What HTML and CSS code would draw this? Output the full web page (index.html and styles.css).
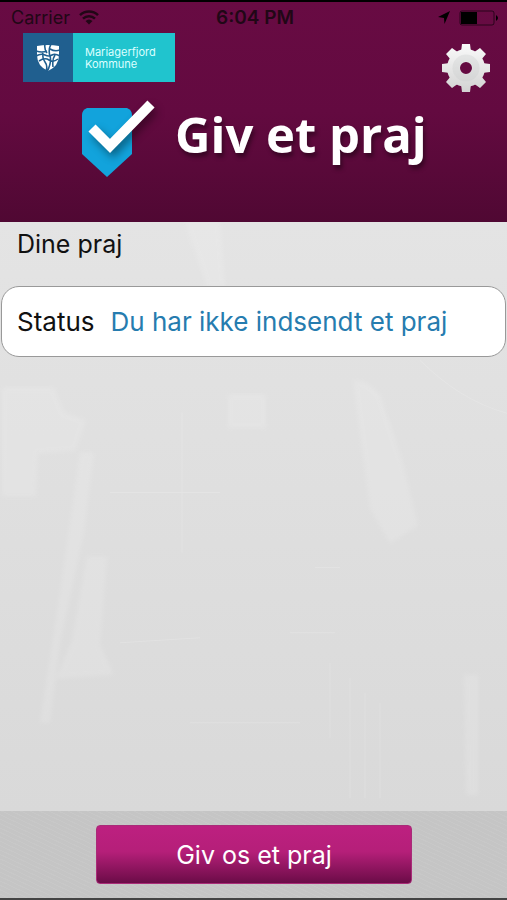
FILE: index.html
```html
<!DOCTYPE html>
<html lang="da">
<head>
<meta charset="utf-8">
<meta name="viewport" content="width=device-width, initial-scale=1">
<title>Giv et praj</title>
<link rel="stylesheet" href="styles.css">
</head>
<body>
<div class="app">
  <header class="header">
    <div class="statusbar">
      <div class="carrier">
        <span>Carrier</span>
        <svg class="wifi" viewBox="0 0 20 15" aria-hidden="true">
          <path d="M1 5.2C6 .4 14 .4 19 5.2M4 8.6c3.400-3.200 8.600-3.200 12 0" fill="none" stroke="currentColor" stroke-width="2.500"/>
          <path d="M6.500 11q3.500-3 7 0L10 14.500z" fill="currentColor"/>
        </svg>
      </div>
      <time class="clock">6:04 PM</time>
      <div class="indicators">
        <svg class="location" viewBox="0 0 12 13" aria-hidden="true"><path d="M12 0 6.500 13 6 7 0 6z" fill="currentColor"/></svg>
        <svg class="battery" viewBox="0 0 40 16" aria-hidden="true">
          <rect x="1" y="1" width="34" height="14" rx="2" fill="none" stroke="currentColor" stroke-width="1" opacity=".6"/>
          <path d="M2 2h16v12H2z" fill="currentColor"/>
          <path d="M37 5q4 3 0 6z" fill="currentColor"/>
        </svg>
      </div>
    </div>
    <div class="toolbar">
      <div class="municipality">
        <span class="crest">
          <svg viewBox="0 0 24 28" aria-hidden="true">
            <path d="M1 2q11-2 22 0v9q0 11-11 16Q1 22 1 11z" fill="#fff"/>
            <path d="M0 7q6 2 11 0M14 5q5 3 10 1M0 12q5-3 9-1t7 0 8 1M3 17q6-4 10-1t9-1M9 0q-1 5 2 9M15 0q-3 6-1 12t-3 16M7 9q-1 5 2 9t1 9M19 11q-3 4-2 12" fill="none" stroke="#205f8f" stroke-width="1.600"/>
          </svg>
        </span>
        <span class="municipality-name">Mariagerfjord<br>Kommune</span>
      </div>
      <button class="settings" type="button" aria-label="Indstillinger">
        <svg viewBox="0 0 48 48" aria-hidden="true">
          <defs>
            <linearGradient id="metal" gradientUnits="userSpaceOnUse" x1="0" y1="0" x2="0" y2="48"><stop stop-color="#fafafa"/><stop offset="1" stop-color="#d2d2d2"/></linearGradient>
          </defs>
          <g fill="url(#metal)">
            <path d="M19 8 20 0h8l1 8zM19 40l1 8h8l1-8z"/>
            <path d="M8 19 0 20v8l8 1zM40 19l8 1v8l-8 1z"/>
            <path d="M9 16 4 10 10 4l7 5zM39 16l5-6-6-6-7 5zM9 32l-5 6 6 6 7-5zM39 32l5 6-6 6-7-5z"/>
            <path fill-rule="evenodd" d="M24 5a19 19 0 1 0 0 38 19 19 0 0 0 0-38zM24 18a6 6 0 1 1 0 12 6 6 0 0 1 0-12z"/>
          </g>
          <circle cx="24" cy="24" r="10" fill="none" stroke="#c7cbc9" stroke-width="7" opacity=".3"/>
        </svg>
      </button>
    </div>
    <div class="brand">
      <svg class="brand-mark" viewBox="0 0 78 84" aria-hidden="true">
        <path d="M7 10h40q5 2 5 7v39L27 79 2 56V17q0-5 5-7z" fill="#12a3dc"/>
        <path class="tick" d="M12 30 30 48 71 6" fill="none" stroke="#fff" stroke-width="10"/>
      </svg>
      <h1>Giv et praj</h1>
    </div>
  </header>
  <main class="content">
    <svg class="map" viewBox="0 0 507 588" preserveAspectRatio="none" aria-hidden="true">
      <g class="areas" fill="#fff" opacity=".12">
        <path d="M353 158q12-2 27 14l22 65 16 66-28 18-20-35zM87 334h20l-7 88 14 30-58 4 16-38zM228 172h38v34h-38zM2 165h52l10 25 22 8-10 30-38 3-2 43H2zM464 452h14v120h-12z"/>
        <path d="M185 0h35l5 65h-18zM80 230h14l-10 80-24 110-10 80H40l20-130z"/>
      </g>
      <g fill="none" stroke="#fff" opacity=".16">
        <path d="M420 138q40 40 87 53M110 270h110M182 190v140M120 420l80-5M315 345h25M330 440v75M350 455v120M365 470v105M380 480v95M290 410h45M190 500h110"/>
      </g>
    </svg>
    <h2>Dine praj</h2>
    <section class="status-card">
      <span>Status</span>
      <span class="status-text">Du har ikke indsendt et praj</span>
    </section>
  </main>
  <footer class="footer">
    <button class="submit" type="button">Giv os et praj</button>
  </footer>
</div>
</body>
</html>
```
FILE: styles.css
```css
* { box-sizing: border-box; }

body {
  margin: 0;
  font-family: Inter, "Liberation Sans", sans-serif;
  color: #111;
}

button { border: 0; font: inherit; cursor: pointer; }
svg { display: block; }

.app {
  display: flex;
  flex-direction: column;
  min-height: 100vh;
  border-bottom: 2px solid #444;
}

.header {
  padding-bottom: 34px;
  border-top: 2px solid #000;
  background: linear-gradient(#680b43, #630a40 50%, #500833);
}

.statusbar {
  display: grid;
  grid-template-columns: 1fr auto 1fr;
  align-items: center;
  height: 31px;
  padding: 0 8px 0 11px;
  color: #210716;
  font-size: 18px;
}

.carrier, .indicators { display: flex; align-items: center; gap: 9px; }
.indicators { justify-content: flex-end; color: #000; }
.wifi { width: 20px; height: 15px; }
.location { width: 12px; height: 13px; }
.battery { width: 40px; height: 16px; }
.clock { font-size: 19px; font-weight: 600; }

.toolbar {
  display: flex;
  justify-content: space-between;
  padding: 0 17px 0 23px;
}

.municipality {
  display: flex;
  width: 152px;
  height: 49px;
  background: #20c4ce;
}

.crest {
  display: grid;
  place-items: center;
  width: 50px;
  background: #205f8f;
}

.crest svg { width: 24px; height: 28px; }

.municipality-name {
  align-self: center;
  padding-left: 12px;
  color: #dcffff;
  font-size: 11px;
  line-height: 12px;
}

.settings {
  width: 48px;
  height: 48px;
  margin-top: 11px;
  padding: 0;
  background: none;
}

.brand {
  display: flex;
  align-items: center;
  gap: 17px;
  height: 96px;
  padding-left: 80px;
}

.brand-mark { width: 78px; height: 84px; overflow: visible; }
.tick { filter: drop-shadow(3px 5px 4px rgba(0, 0, 0, 0.4)); }

h1 {
  margin: 0 0 12px;
  color: #fff;
  font: 700 49px/60px "Open Sans", sans-serif;
  white-space: nowrap;
  text-shadow: 2px 4px 4px rgba(0, 0, 0, 0.4);
}

.content {
  position: relative;
  flex: 1;
  background: linear-gradient(#e4e4e4, #d9d9d9);
}

.map {
  position: absolute;
  inset: 0;
  width: 100%;
  height: 100%;
}

.areas { filter: blur(2px); }

h2 {
  position: relative;
  margin: 0;
  padding: 6px 17px 26px;
  font-size: 25px;
  font-weight: 400;
  line-height: 32px;
}

.status-card {
  position: relative;
  display: flex;
  align-items: center;
  gap: 16px;
  height: 71px;
  margin: 0 1px;
  padding: 0 15px;
  border: 1px solid #999;
  border-radius: 18px;
  background: #fff;
  font-size: 26px;
}

.status-text { color: #267caf; }

.footer {
  display: flex;
  justify-content: center;
  padding: 14px 95px 14px 96px;
  background:
    repeating-linear-gradient(25deg, transparent 0 3px, rgba(255, 255, 255, 0.06) 3px 4px),
    #c5c5c5;
}

.submit {
  width: 100%;
  height: 59px;
  border: 1px solid #a92b78;
  border-radius: 4px;
  background: linear-gradient(#bd2080, #b51f79 45%, #6b0c47);
  color: #fff;
  font-size: 25px;
}
```
